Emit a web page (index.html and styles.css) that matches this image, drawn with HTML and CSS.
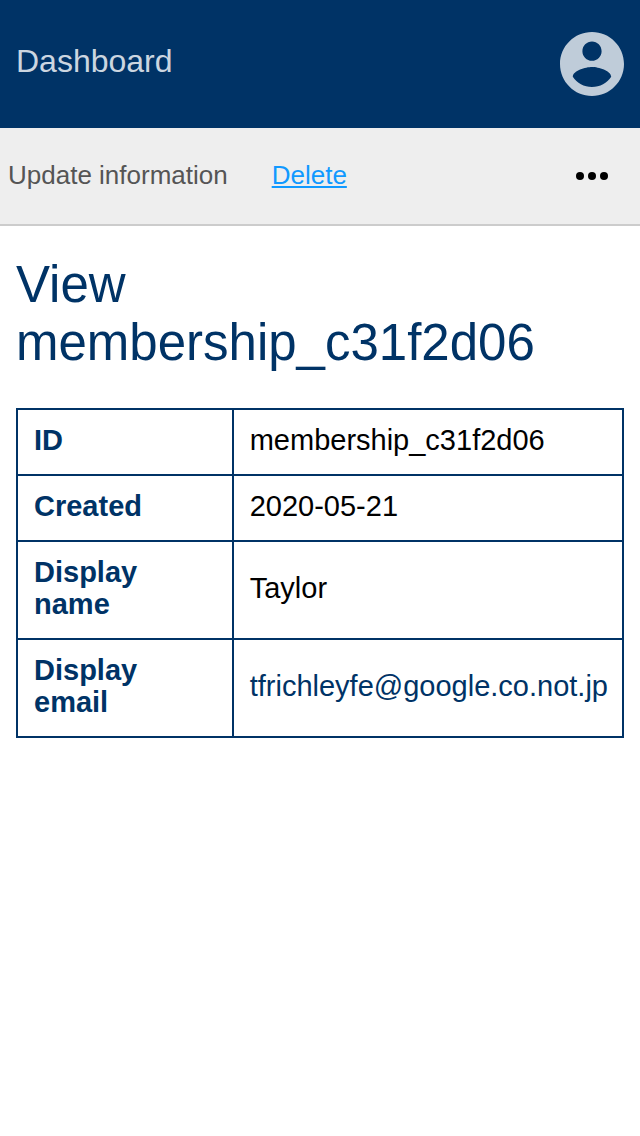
FILE: index.html
```html
<!DOCTYPE html>
<html lang="en">
<head>
<meta charset="utf-8">
<meta name="viewport" content="width=device-width, initial-scale=1">
<title>View membership</title>
<link rel="stylesheet" href="styles.css">
</head>
<body>
<header class="topbar">
  <a class="topbar-title" href="#">Dashboard</a>
  <button class="account" type="button" aria-label="Account">
    <svg class="account-icon" viewBox="2 2 20 20" aria-hidden="true"><path d="M12 2C6.48 2 2 6.48 2 12s4.480 10 10 10 10-4.480 10-10S17.520 2 12 2zm0 3c1.660 0 3 1.340 3 3s-1.340 3-3 3-3-1.340-3-3 1.340-3 3-3zm0 14.200c-2.500 0-4.710-1.280-6-3.220.030-1.990 4-3.080 6-3.080 1.990 0 5.970 1.090 6 3.080-1.290 1.940-3.500 3.220-6 3.220z"/></svg>
  </button>
</header>
<nav class="actions" aria-label="Actions">
  <a class="action" href="#">Update information</a>
  <a class="action action-active" href="#">Delete</a>
  <button class="more" type="button" aria-label="More actions">
    <svg class="more-icon" viewBox="0 0 32 8" aria-hidden="true"><circle cx="4" cy="4" r="4"/><circle cx="16" cy="4" r="4"/><circle cx="28" cy="4" r="4"/></svg>
  </button>
</nav>
<main class="content">
  <h1 class="title">View membership_c31f2d06</h1>
  <table class="details">
    <tbody>
      <tr><th scope="row">ID</th><td>membership_c31f2d06</td></tr>
      <tr><th scope="row">Created</th><td>2020-05-21</td></tr>
      <tr><th scope="row">Display name</th><td>Taylor</td></tr>
      <tr><th scope="row">Display email</th><td><a class="email" href="mailto:tfrichleyfe@google.co.not.jp">tfrichleyfe@google.co.not.jp</a></td></tr>
    </tbody>
  </table>
</main>
</body>
</html>
```

FILE: styles.css
```css
* {
  box-sizing: border-box;
}

body {
  margin: 0;
  background: #fff;
  color: #000;
  font-family: "Liberation Sans", Arial, sans-serif;
}

a {
  text-decoration: none;
}

button {
  padding: 0;
  border: 0;
  background: none;
}

.topbar {
  display: flex;
  align-items: center;
  justify-content: space-between;
  padding: 32px 16px;
  background: #036;
}

.topbar-title {
  padding-bottom: 6px;
  color: #ccd6e0;
  font-size: 32px;
  line-height: 36px;
}

.account-icon {
  display: block;
  width: 64px;
  height: 64px;
  fill: #bfccd9;
}

.actions {
  display: flex;
  align-items: center;
  gap: 44px;
  padding: 32px 32px 32px 8px;
  border-bottom: 2px solid #ccc;
  background: #eee;
}

.action {
  padding-bottom: 2px;
  color: #555;
  font-size: 26px;
  line-height: 30px;
}

.action-active {
  color: #19f;
  text-decoration: underline;
}

.more {
  margin-left: auto;
}

.more-icon {
  display: block;
  width: 32px;
  height: 8px;
}

.content {
  padding: 30px 16px;
}

.title {
  margin: 0 0 36px;
  color: #036;
  font-size: 51px;
  font-weight: 400;
  line-height: 58px;
}

.details {
  width: 100%;
  border-collapse: collapse;
  font-size: 29px;
  line-height: 32px;
}

.details th,
.details td {
  padding: 14px 14px 18px 16px;
  border: 2px solid #036;
  text-align: left;
}

.details th {
  width: 216px;
  padding-right: 64px;
  color: #036;
}

.email {
  color: #036;
}
```
